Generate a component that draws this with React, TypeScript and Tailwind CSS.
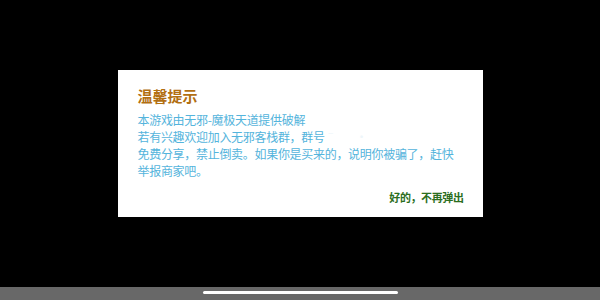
export default function App() {
  const font = { fontFamily: '"Noto Sans CJK SC", "Noto Sans", sans-serif' };

  return (
    <div className="flex h-[300px] w-[600px] flex-col bg-black" style={font}>
      {/* Dimmed game area with the notice */}
      <div className="flex flex-1 items-center justify-center">
        <div className="flex w-[365px] flex-col bg-white pl-[20px] pr-[19px] pt-[16px] pb-[12px]">
          <h1 className="text-[15px] font-bold leading-[20px] text-[#b26f12]">温馨提示</h1>
          <div className="mt-[5px] text-[12px] leading-[17px] tracking-[-0.3px] text-[#54b4dc]">
            <p>本游戏由无邪-魔极天道提供破解</p>
            <p>
              若有兴趣欢迎加入无邪客栈群，群号
              <span className="text-[#eef6fa]">ˉ&nbsp;&nbsp;&nbsp;&nbsp;&nbsp;&nbsp;&nbsp;&nbsp;·</span>
            </p>
            <p>免费分享，禁止倒卖。如果你是买来的，说明你被骗了，赶快</p>
            <p>举报商家吧。</p>
          </div>
          <div className="mt-[10px] flex justify-end">
            <button className="text-[11px] font-bold leading-[16px] tracking-[-0.4px] text-[#2c6e1e]">好的，不再弹出</button>
          </div>
        </div>
      </div>

      {/* Navigation bar */}
      <div className="flex h-[13px] items-start justify-center bg-[#686868]">
        <div className="mt-[4px] h-[3px] w-[195px] rounded-full bg-white" />
      </div>
    </div>
  );
}
